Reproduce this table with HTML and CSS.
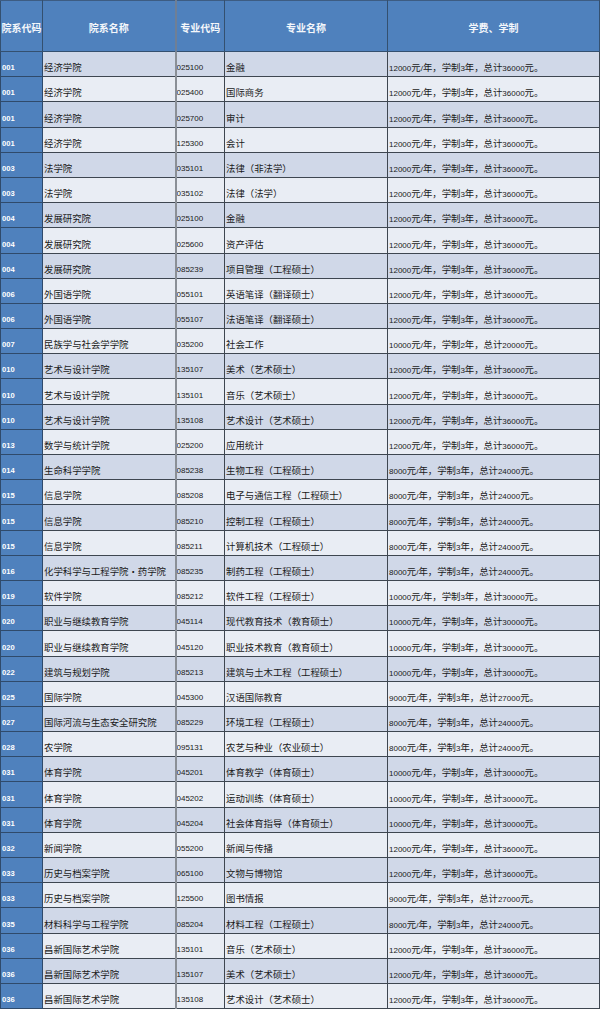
FILE: index.html
```html
<!DOCTYPE html>
<html lang="zh-CN">
<head>
<meta charset="utf-8">
<title>学费、学制</title>
<link rel="stylesheet" href="styles.css">
</head>
<body>
<table class="fees">
<colgroup>
<col class="c1"><col class="c2"><col class="c3"><col class="c4"><col class="c5">
</colgroup>
<thead>
<tr><th>院系代码</th><th>院系名称</th><th class="sep">专业代码</th><th>专业名称</th><th>学费、学制</th></tr>
</thead>
<tbody>
<tr><td class="id">001</td><td>经济学院</td><td class="code">025100</td><td>金融</td><td><span class="n">12000</span>元<span class="n">/</span>年，学制<span class="n">3</span>年，总计<span class="n">36000</span>元。</td></tr>
<tr><td class="id">001</td><td>经济学院</td><td class="code">025400</td><td>国际商务</td><td><span class="n">12000</span>元<span class="n">/</span>年，学制<span class="n">3</span>年，总计<span class="n">36000</span>元。</td></tr>
<tr><td class="id">001</td><td>经济学院</td><td class="code">025700</td><td>审计</td><td><span class="n">12000</span>元<span class="n">/</span>年，学制<span class="n">3</span>年，总计<span class="n">36000</span>元。</td></tr>
<tr><td class="id">001</td><td>经济学院</td><td class="code">125300</td><td>会计</td><td><span class="n">12000</span>元<span class="n">/</span>年，学制<span class="n">3</span>年，总计<span class="n">36000</span>元。</td></tr>
<tr><td class="id">003</td><td>法学院</td><td class="code">035101</td><td>法律（非法学）</td><td><span class="n">12000</span>元<span class="n">/</span>年，学制<span class="n">3</span>年，总计<span class="n">36000</span>元。</td></tr>
<tr><td class="id">003</td><td>法学院</td><td class="code">035102</td><td>法律（法学）</td><td><span class="n">12000</span>元<span class="n">/</span>年，学制<span class="n">3</span>年，总计<span class="n">36000</span>元。</td></tr>
<tr><td class="id">004</td><td>发展研究院</td><td class="code">025100</td><td>金融</td><td><span class="n">12000</span>元<span class="n">/</span>年，学制<span class="n">3</span>年，总计<span class="n">36000</span>元。</td></tr>
<tr><td class="id">004</td><td>发展研究院</td><td class="code">025600</td><td>资产评估</td><td><span class="n">12000</span>元<span class="n">/</span>年，学制<span class="n">3</span>年，总计<span class="n">36000</span>元。</td></tr>
<tr><td class="id">004</td><td>发展研究院</td><td class="code">085239</td><td>项目管理（工程硕士）</td><td><span class="n">12000</span>元<span class="n">/</span>年，学制<span class="n">3</span>年，总计<span class="n">36000</span>元。</td></tr>
<tr><td class="id">006</td><td>外国语学院</td><td class="code">055101</td><td>英语笔译（翻译硕士）</td><td><span class="n">12000</span>元<span class="n">/</span>年，学制<span class="n">3</span>年，总计<span class="n">36000</span>元。</td></tr>
<tr><td class="id">006</td><td>外国语学院</td><td class="code">055107</td><td>法语笔译（翻译硕士）</td><td><span class="n">12000</span>元<span class="n">/</span>年，学制<span class="n">3</span>年，总计<span class="n">36000</span>元。</td></tr>
<tr><td class="id">007</td><td>民族学与社会学学院</td><td class="code">035200</td><td>社会工作</td><td><span class="n">10000</span>元<span class="n">/</span>年，学制<span class="n">2</span>年，总计<span class="n">20000</span>元。</td></tr>
<tr><td class="id">010</td><td>艺术与设计学院</td><td class="code">135107</td><td>美术（艺术硕士）</td><td><span class="n">12000</span>元<span class="n">/</span>年，学制<span class="n">3</span>年，总计<span class="n">36000</span>元。</td></tr>
<tr><td class="id">010</td><td>艺术与设计学院</td><td class="code">135101</td><td>音乐（艺术硕士）</td><td><span class="n">12000</span>元<span class="n">/</span>年，学制<span class="n">3</span>年，总计<span class="n">36000</span>元。</td></tr>
<tr><td class="id">010</td><td>艺术与设计学院</td><td class="code">135108</td><td>艺术设计（艺术硕士）</td><td><span class="n">12000</span>元<span class="n">/</span>年，学制<span class="n">3</span>年，总计<span class="n">36000</span>元。</td></tr>
<tr><td class="id">013</td><td>数学与统计学院</td><td class="code">025200</td><td>应用统计</td><td><span class="n">12000</span>元<span class="n">/</span>年，学制<span class="n">3</span>年，总计<span class="n">36000</span>元。</td></tr>
<tr><td class="id">014</td><td>生命科学学院</td><td class="code">085238</td><td>生物工程（工程硕士）</td><td><span class="n">8000</span>元<span class="n">/</span>年，学制<span class="n">3</span>年，总计<span class="n">24000</span>元。</td></tr>
<tr><td class="id">015</td><td>信息学院</td><td class="code">085208</td><td>电子与通信工程（工程硕士）</td><td><span class="n">8000</span>元<span class="n">/</span>年，学制<span class="n">3</span>年，总计<span class="n">24000</span>元。</td></tr>
<tr><td class="id">015</td><td>信息学院</td><td class="code">085210</td><td>控制工程（工程硕士）</td><td><span class="n">8000</span>元<span class="n">/</span>年，学制<span class="n">3</span>年，总计<span class="n">24000</span>元。</td></tr>
<tr><td class="id">015</td><td>信息学院</td><td class="code">085211</td><td>计算机技术（工程硕士）</td><td><span class="n">8000</span>元<span class="n">/</span>年，学制<span class="n">3</span>年，总计<span class="n">24000</span>元。</td></tr>
<tr><td class="id">016</td><td>化学科学与工程学院·药学院</td><td class="code">085235</td><td>制药工程（工程硕士）</td><td><span class="n">8000</span>元<span class="n">/</span>年，学制<span class="n">3</span>年，总计<span class="n">24000</span>元。</td></tr>
<tr><td class="id">019</td><td>软件学院</td><td class="code">085212</td><td>软件工程（工程硕士）</td><td><span class="n">10000</span>元<span class="n">/</span>年，学制<span class="n">3</span>年，总计<span class="n">30000</span>元。</td></tr>
<tr><td class="id">020</td><td>职业与继续教育学院</td><td class="code">045114</td><td>现代教育技术（教育硕士）</td><td><span class="n">10000</span>元<span class="n">/</span>年，学制<span class="n">3</span>年，总计<span class="n">30000</span>元。</td></tr>
<tr><td class="id">020</td><td>职业与继续教育学院</td><td class="code">045120</td><td>职业技术教育（教育硕士）</td><td><span class="n">10000</span>元<span class="n">/</span>年，学制<span class="n">3</span>年，总计<span class="n">30000</span>元。</td></tr>
<tr><td class="id">022</td><td>建筑与规划学院</td><td class="code">085213</td><td>建筑与土木工程（工程硕士）</td><td><span class="n">10000</span>元<span class="n">/</span>年，学制<span class="n">3</span>年，总计<span class="n">30000</span>元。</td></tr>
<tr><td class="id">025</td><td>国际学院</td><td class="code">045300</td><td>汉语国际教育</td><td><span class="n">9000</span>元<span class="n">/</span>年，学制<span class="n">3</span>年，总计<span class="n">27000</span>元。</td></tr>
<tr><td class="id">027</td><td>国际河流与生态安全研究院</td><td class="code">085229</td><td>环境工程（工程硕士）</td><td><span class="n">8000</span>元<span class="n">/</span>年，学制<span class="n">3</span>年，总计<span class="n">24000</span>元。</td></tr>
<tr><td class="id">028</td><td>农学院</td><td class="code">095131</td><td>农艺与种业（农业硕士）</td><td><span class="n">8000</span>元<span class="n">/</span>年，学制<span class="n">3</span>年，总计<span class="n">24000</span>元。</td></tr>
<tr><td class="id">031</td><td>体育学院</td><td class="code">045201</td><td>体育教学（体育硕士）</td><td><span class="n">10000</span>元<span class="n">/</span>年，学制<span class="n">3</span>年，总计<span class="n">30000</span>元。</td></tr>
<tr><td class="id">031</td><td>体育学院</td><td class="code">045202</td><td>运动训练（体育硕士）</td><td><span class="n">10000</span>元<span class="n">/</span>年，学制<span class="n">3</span>年，总计<span class="n">30000</span>元。</td></tr>
<tr><td class="id">031</td><td>体育学院</td><td class="code">045204</td><td>社会体育指导（体育硕士）</td><td><span class="n">10000</span>元<span class="n">/</span>年，学制<span class="n">3</span>年，总计<span class="n">30000</span>元。</td></tr>
<tr><td class="id">032</td><td>新闻学院</td><td class="code">055200</td><td>新闻与传播</td><td><span class="n">12000</span>元<span class="n">/</span>年，学制<span class="n">3</span>年，总计<span class="n">36000</span>元。</td></tr>
<tr><td class="id">033</td><td>历史与档案学院</td><td class="code">065100</td><td>文物与博物馆</td><td><span class="n">12000</span>元<span class="n">/</span>年，学制<span class="n">3</span>年，总计<span class="n">36000</span>元。</td></tr>
<tr><td class="id">033</td><td>历史与档案学院</td><td class="code">125500</td><td>图书情报</td><td><span class="n">9000</span>元<span class="n">/</span>年，学制<span class="n">3</span>年，总计<span class="n">27000</span>元。</td></tr>
<tr><td class="id">035</td><td>材料科学与工程学院</td><td class="code">085204</td><td>材料工程（工程硕士）</td><td><span class="n">8000</span>元<span class="n">/</span>年，学制<span class="n">3</span>年，总计<span class="n">24000</span>元。</td></tr>
<tr><td class="id">036</td><td>昌新国际艺术学院</td><td class="code">135101</td><td>音乐（艺术硕士）</td><td><span class="n">12000</span>元<span class="n">/</span>年，学制<span class="n">3</span>年，总计<span class="n">36000</span>元。</td></tr>
<tr><td class="id">036</td><td>昌新国际艺术学院</td><td class="code">135107</td><td>美术（艺术硕士）</td><td><span class="n">12000</span>元<span class="n">/</span>年，学制<span class="n">3</span>年，总计<span class="n">36000</span>元。</td></tr>
<tr><td class="id">036</td><td>昌新国际艺术学院</td><td class="code">135108</td><td>艺术设计（艺术硕士）</td><td><span class="n">12000</span>元<span class="n">/</span>年，学制<span class="n">3</span>年，总计<span class="n">36000</span>元。</td></tr>
</tbody>
</table>
</body>
</html>
```
FILE: styles.css
```css
html, body {
  margin: 0;
  padding: 0;
  background: #ffffff;
}

.fees {
  border-collapse: collapse;
  table-layout: fixed;
  width: 599px;
  font-family: "Noto Sans CJK SC", "Noto Sans", sans-serif;
  font-size: 9.4px;
  color: #1a1a1a;
}

.c1 { width: 42px; }
.c2 { width: 133px; }
.c3 { width: 49px; }
.c4 { width: 163px; }
.c5 { width: 212px; }

.fees thead tr {
  height: 51px;
}

.fees tbody tr {
  height: 25.2px;
}

.fees th {
  padding: 4px 0 0 0;
  line-height: 12px;
  background: #4f81bd;
  color: #f4f7fb;
  font-weight: bold;
  font-size: 10px;
  text-align: center;
  vertical-align: middle;
  border: 1px solid #34506f;
  border-top: 1px solid #3d5c82;
}

.fees td {
  padding: 0 0 3px 1px;
  line-height: 11px;
  vertical-align: bottom;
  white-space: nowrap;
  overflow: hidden;
  border: 1px solid #3e4650;
  background: #d0d8e8;
}

.fees tbody tr:nth-child(even) td {
  background: #e9edf4;
}

.fees tbody tr td.id {
  background: #4f81bd;
  color: #ffffff;
  font-family: "Liberation Sans", sans-serif;
  font-weight: bold;
  font-size: 7.6px;
  padding-left: 1px;
  border-color: #2f4a6b;
}

.fees td.code {
  font-family: "Liberation Sans", sans-serif;
  font-size: 8px;
  border-left: 2px solid #8a8f96;
  padding-left: 0;
}

.fees th.sep {
  border-left: 2px solid #6f7f95;
}

.n {
  font-family: "Liberation Sans", sans-serif;
  font-size: 8px;
  line-height: 8px;
}
```
